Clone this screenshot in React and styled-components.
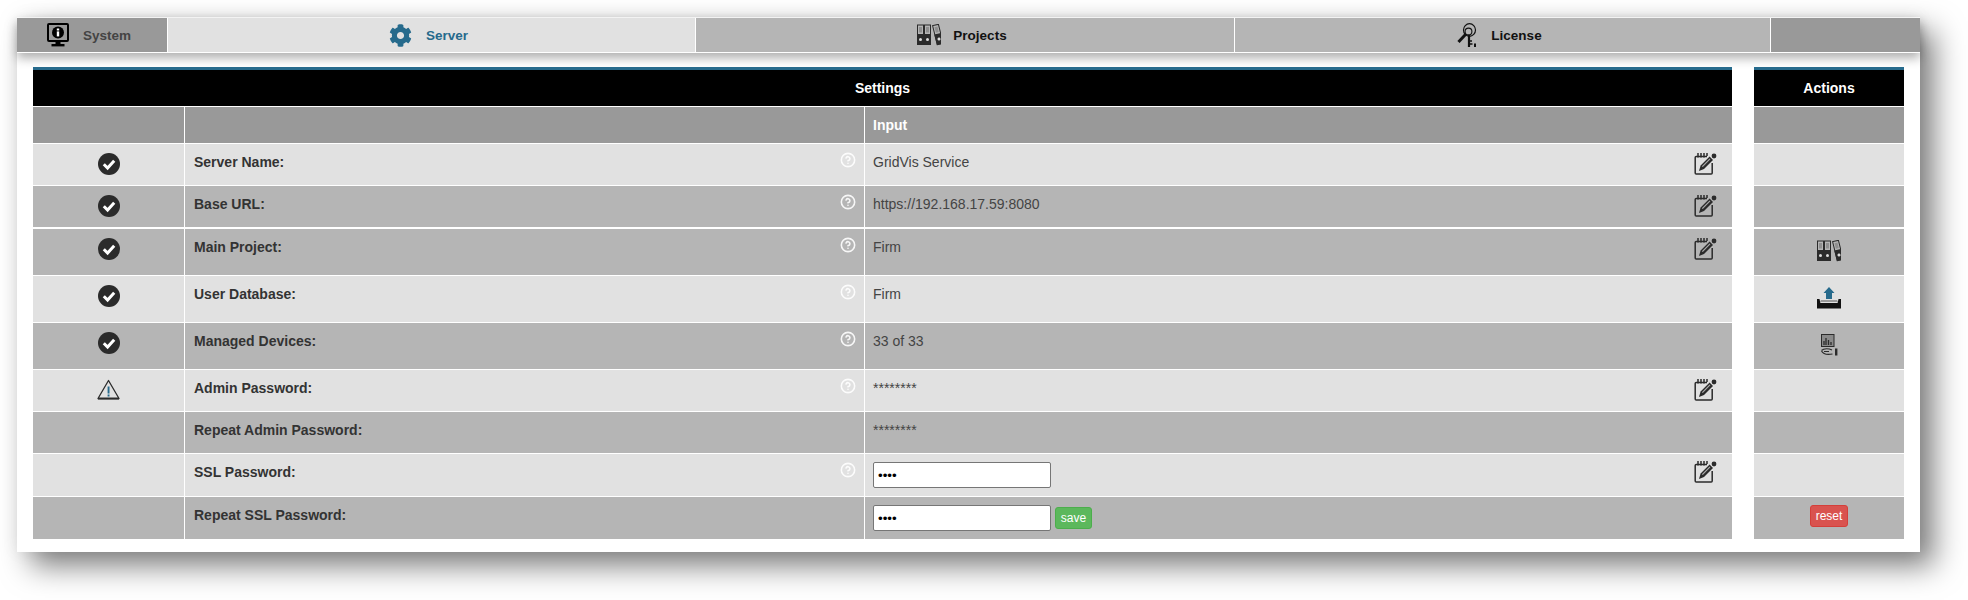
import React from 'react';
import styled, { createGlobalStyle } from 'styled-components';
import { FaCog } from 'react-icons/fa';
import { CircleHelp } from 'lucide-react';

const BLUE = '#266a8c';
const DARK = '#2b2b2b';

const Global = createGlobalStyle`
    html, body {
        margin: 0;
        background: #fff;
        font-family: "Liberation Sans", Arial, sans-serif;
        font-size: 13px;
        color: #444;
    }
`;

const Page = styled.div`
    height: 600px;
    padding: 17px 48px 0 17px;
    box-sizing: border-box;
    overflow: hidden;
`;

const Panel = styled.div`
    height: 535px;
    background: #fff;
    padding-top: 1px;
    box-sizing: border-box;
    box-shadow: 14px 14px 28px rgba(0, 0, 0, .5), 0 0 18px rgba(0, 0, 0, .06);
`;

const Nav = styled.nav`
    display: grid;
    grid-template-columns: 150px 527px 538px 535px 1fr;
    column-gap: 1px;
    height: 34px;
    background: #fff;
    border-bottom: 1px solid #fff;
    box-shadow: 0 5px 10px rgba(0, 0, 0, .32);
    margin-bottom: 14px;
`;

const Tab = styled.div`
    display: flex;
    align-items: center;
    justify-content: center;
    gap: ${p => p.$gap || 14}px;
    padding-right: 6px;
    font-size: 13.5px;
    font-weight: bold;
    background: ${p => p.$bg};
    color: ${p => p.$color};
`;

const Tables = styled.div`
    display: flex;
    gap: 22px;
    padding: 0 16px;
`;

const Sheet = styled.div`
    flex: ${p => (p.$side ? '0 0 150px' : '1')};
    display: flex;
    flex-direction: column;
    gap: 1px;
    border-top: 3px solid ${BLUE};
`;

const Title = styled.div`
    height: 36px;
    background: #000;
    color: #fff;
    font-size: 14px;
    font-weight: bold;
    line-height: 36px;
    text-align: center;
`;

const Row = styled.div`
    display: grid;
    grid-template-columns: ${p => (p.$side ? '1fr' : '151px 679px 1fr')};
    column-gap: 1px;
    height: ${p => p.$h}px;
    margin-top: ${p => p.$extra || 0}px;
`;

const Cell = styled.div`
    background: ${p => p.$tone};
    display: flex;
    align-items: flex-start;
    box-sizing: border-box;
`;

const StateCell = styled(Cell)`
    justify-content: center;
    padding-top: 9px;
`;

const LabelCell = styled(Cell)`
    justify-content: space-between;
    padding: 10px 9px 0 9px;
    font-size: 14px;
    line-height: 16px;
    font-weight: bold;
    color: #333;
`;

const ValueCell = styled(Cell)`
    justify-content: space-between;
    padding: ${p => (p.$form ? 8 : 10)}px 15px 0 8px;
    font-size: 14px;
    line-height: 16px;
`;

const ActionCell = styled(Cell)`
    justify-content: center;
    padding-top: ${p => p.$top || 10}px;
`;

const HeadLabel = styled.span`
    color: #fff;
    font-size: 14px;
    font-weight: bold;
`;

const Help = styled(CircleHelp)`
    width: 16px;
    height: 16px;
    margin-top: -2px;
    margin-right: -1px;
    color: #fff;
    opacity: .9;
`;

const EditBox = styled.span`
    display: block;
    margin-top: -1px;
    height: 22px;
`;

const Form = styled.div`
    display: flex;
    align-items: center;
    gap: 4px;
`;

const Input = styled.input`
    width: 178px;
    height: 26px;
    box-sizing: border-box;
    padding: 1px 8px 1px 4px;
    border: 1px solid #767676;
    border-radius: 2px;
    background: #fff;
    font-family: "Liberation Sans", Arial, sans-serif;
    font-size: 13.33px;
`;

const Button = styled.button`
    height: 22px;
    width: ${p => p.$w}px;
    padding: 0;
    border: 1px solid ${p => p.$edge};
    border-radius: 3px;
    background: ${p => p.$bg};
    color: #fff;
    font-family: "Liberation Sans", Arial, sans-serif;
    font-size: 12px;
`;

const Monitor = () => (
    <svg width="22" height="24" viewBox="0 0 22 24">
        <rect x="1" y="1" width="20" height="17" rx="1" fill="none" stroke="#000" strokeWidth="2" />
        <circle cx="11" cy="9.5" r="6" fill="#000" />
        <rect x="9.8" y="8.4" width="2.4" height="5" fill="#fff" />
        <rect x="9.8" y="5.5" width="2.4" height="2" fill="#fff" />
        <rect x="8.5" y="18" width="5" height="3" fill="#000" />
        <rect x="4.5" y="21" width="13" height="2.4" fill="#000" />
    </svg>
);

const Check = () => (
    <svg width="22" height="22" viewBox="0 0 22 22">
        <circle cx="11" cy="11" r="11" fill={DARK} />
        <path d="M5.8 11.2 L9.6 15 L16.2 7.8" fill="none" stroke="#fff" strokeWidth="3" />
    </svg>
);

const Binder = ({ x, rotate }) => (
    <g transform={`translate(${x} 0) ${rotate ? 'rotate(-14 3.5 1)' : ''}`}>
        <rect x=".5" y="1" width="6" height="19.5" fill="none" stroke={DARK} />
        <rect x="0" y="10" width="7" height="11" fill={DARK} />
        <rect x="2" y="3" width="3" height="5.5" fill="#8f8f8f" />
        <circle cx="3.5" cy="15.5" r="1.5" fill="#ddd" />
    </g>
);

const Binders = () => (
    <svg width="24" height="22" viewBox="0 0 24 22">
        <Binder x={0} />
        <Binder x={7} />
        <Binder x={15} rotate />
    </svg>
);

const Keys = () => (
    <svg width="20" height="25" viewBox="0 0 20 25" fill="none" stroke="#111">
        <ellipse cx="12.500" cy="7" rx="6" ry="6.300" strokeWidth="1.2" />
        <circle cx="11.500" cy="8.500" r="3.400" strokeWidth="1.1" />
        <path d="M8.500 11.500 L1.500 19" strokeWidth="3" />
        <path d="M12 12 V24" strokeWidth="2.2" />
        <path d="M13 21 h2.500 M13 18 h2" strokeWidth="1.300" />
        <rect x="17" y="20.500" width="2" height="3.500" fill="#111" stroke="none" />
    </svg>
);

const Edit = () => (
    <svg width="23" height="22" viewBox="0 0 23 22">
        <path d="M13 3.500H2.200a1 1 0 0 0-1 1V20a1 1 0 0 0 1 1h15a1 1 0 0 0 1-1V10" fill="none" stroke={DARK} strokeWidth="1.500" />
        <path d="M4 0v4.500M7 0v4.500M10 0v4.500M13 0v3" stroke={DARK} strokeWidth="1.500" />
        <path d="M5 18 L6.600 12.600 L15.600 3.600 L19 7 L10 16z" fill={DARK} />
        <path d="M7.800 13.200 L15.600 5.400 L16.400 6.200 L8.800 14z" fill="#e1e1e1" opacity=".7" />
        <circle cx="20" cy="3" r="2.400" fill={DARK} />
    </svg>
);

const Warning = () => (
    <svg width="23" height="21" viewBox="0 0 23 21">
        <path d="M11.500 1.500 L22 19.500 H1z" fill="none" stroke={DARK} strokeWidth="1.300" strokeLinejoin="round" />
        <path d="M1 19.600 H22" stroke={DARK} strokeWidth="1.800" />
        <rect x="10.600" y="7.500" width="1.900" height="7" fill={BLUE} />
        <rect x="10.600" y="15.500" width="1.900" height="2" fill={BLUE} />
    </svg>
);

const Upload = () => (
    <svg width="24" height="22" viewBox="0 0 24 22">
        <path d="M12 0 L17.500 6 H15 V12 H9 V6 H6.500z" fill={BLUE} />
        <path d="M4 13 H20 L21 15 H3z" fill="#999" />
        <path d="M0 12 H2.500 L3.400 16 H20.600 L21.500 12 H24 V21.500 H0z" fill="#111" />
    </svg>
);

const Device = () => (
    <svg width="17" height="22" viewBox="0 0 17 22">
        <rect x=".5" y=".5" width="12.500" height="12" fill="#8a8a8a" stroke={DARK} />
        <path d="M3 11V7M5 11V4M7.500 11V6M10 11V8" stroke={DARK} strokeWidth="1.300" />
        <path d="M.5 16.500 C3 14 8 14.500 11 16 M.5 17 C2 20 6 21 11.500 20 M3 17.500 H8" fill="none" stroke={DARK} strokeWidth="1.200" />
        <rect x="14" y="14.500" width="2.400" height="7" fill={DARK} />
    </svg>
);

const LIGHT = '#e1e1e1';
const GREY = '#b5b5b5';

const rows = [
    { h: 41, tone: LIGHT, state: 'ok', label: 'Server Name:', value: 'GridVis Service', help: true, edit: true },
    { h: 41, tone: GREY, state: 'ok', label: 'Base URL:', value: 'https://192.168.17.59:8080', help: true, edit: true },
    { h: 46, tone: GREY, state: 'ok', label: 'Main Project:', value: 'Firm', help: true, edit: true, extra: 1, action: <Binders /> },
    { h: 46, tone: LIGHT, state: 'ok', label: 'User Database:', value: 'Firm', help: true, action: <Upload /> },
    { h: 46, tone: GREY, state: 'ok', label: 'Managed Devices:', value: '33 of 33', help: true, action: <Device /> },
    { h: 41, tone: LIGHT, state: 'warn', label: 'Admin Password:', value: '********', help: true, edit: true },
    { h: 41, tone: GREY, label: 'Repeat Admin Password:', value: '********' },
    { h: 42, tone: LIGHT, label: 'SSL Password:', input: true, help: true, edit: true },
    { h: 42, tone: GREY, label: 'Repeat SSL Password:', input: true, save: true, reset: true },
];

function App() {
    return (
        <Page>
            <Global />
            <Panel>
                <Nav>
                    <Tab $bg="#999" $color="#444"><Monitor />System</Tab>
                    <Tab $bg={LIGHT} $color={BLUE}><FaCog size={23} color={BLUE} />Server</Tab>
                    <Tab $bg={GREY} $color="#111" $gap={12}><Binders />Projects</Tab>
                    <Tab $bg={GREY} $color="#111"><Keys />License</Tab>
                    <Tab $bg="#999" />
                </Nav>
                <Tables>
                    <Sheet>
                        <Title>Settings</Title>
                        <Row $h={36}>
                            <Cell $tone="#999" />
                            <Cell $tone="#999" />
                            <ValueCell $tone="#999"><HeadLabel>Input</HeadLabel></ValueCell>
                        </Row>
                        {rows.map(row => (
                            <Row key={row.label} $h={row.h} $extra={row.extra}>
                                <StateCell $tone={row.tone}>
                                    {row.state === 'ok' && <Check />}
                                    {row.state === 'warn' && <Warning />}
                                </StateCell>
                                <LabelCell $tone={row.tone}>
                                    <span>{row.label}</span>
                                    {row.help && <Help strokeWidth={2.4} />}
                                </LabelCell>
                                <ValueCell $tone={row.tone} $form={row.input}>
                                    {row.input ? (
                                        <Form>
                                            <Input type="password" defaultValue="abcd" />
                                            {row.save && <Button $w={37} $bg="#5cb85c" $edge="#4cae4c">save</Button>}
                                        </Form>
                                    ) : <span>{row.value}</span>}
                                    {row.edit && <EditBox><Edit /></EditBox>}
                                </ValueCell>
                            </Row>
                        ))}
                    </Sheet>
                    <Sheet $side>
                        <Title>Actions</Title>
                        <Row $side $h={36}><Cell $tone="#999" /></Row>
                        {rows.map(row => (
                            <Row $side key={row.label} $h={row.h} $extra={row.extra}>
                                <ActionCell $tone={row.tone} $top={row.reset ? 8 : 11}>
                                    {row.action}
                                    {row.reset && <Button $w={38} $bg="#d9534f" $edge="#d43f3a">reset</Button>}
                                </ActionCell>
                            </Row>
                        ))}
                    </Sheet>
                </Tables>
            </Panel>
        </Page>
    );
}

export default App;
